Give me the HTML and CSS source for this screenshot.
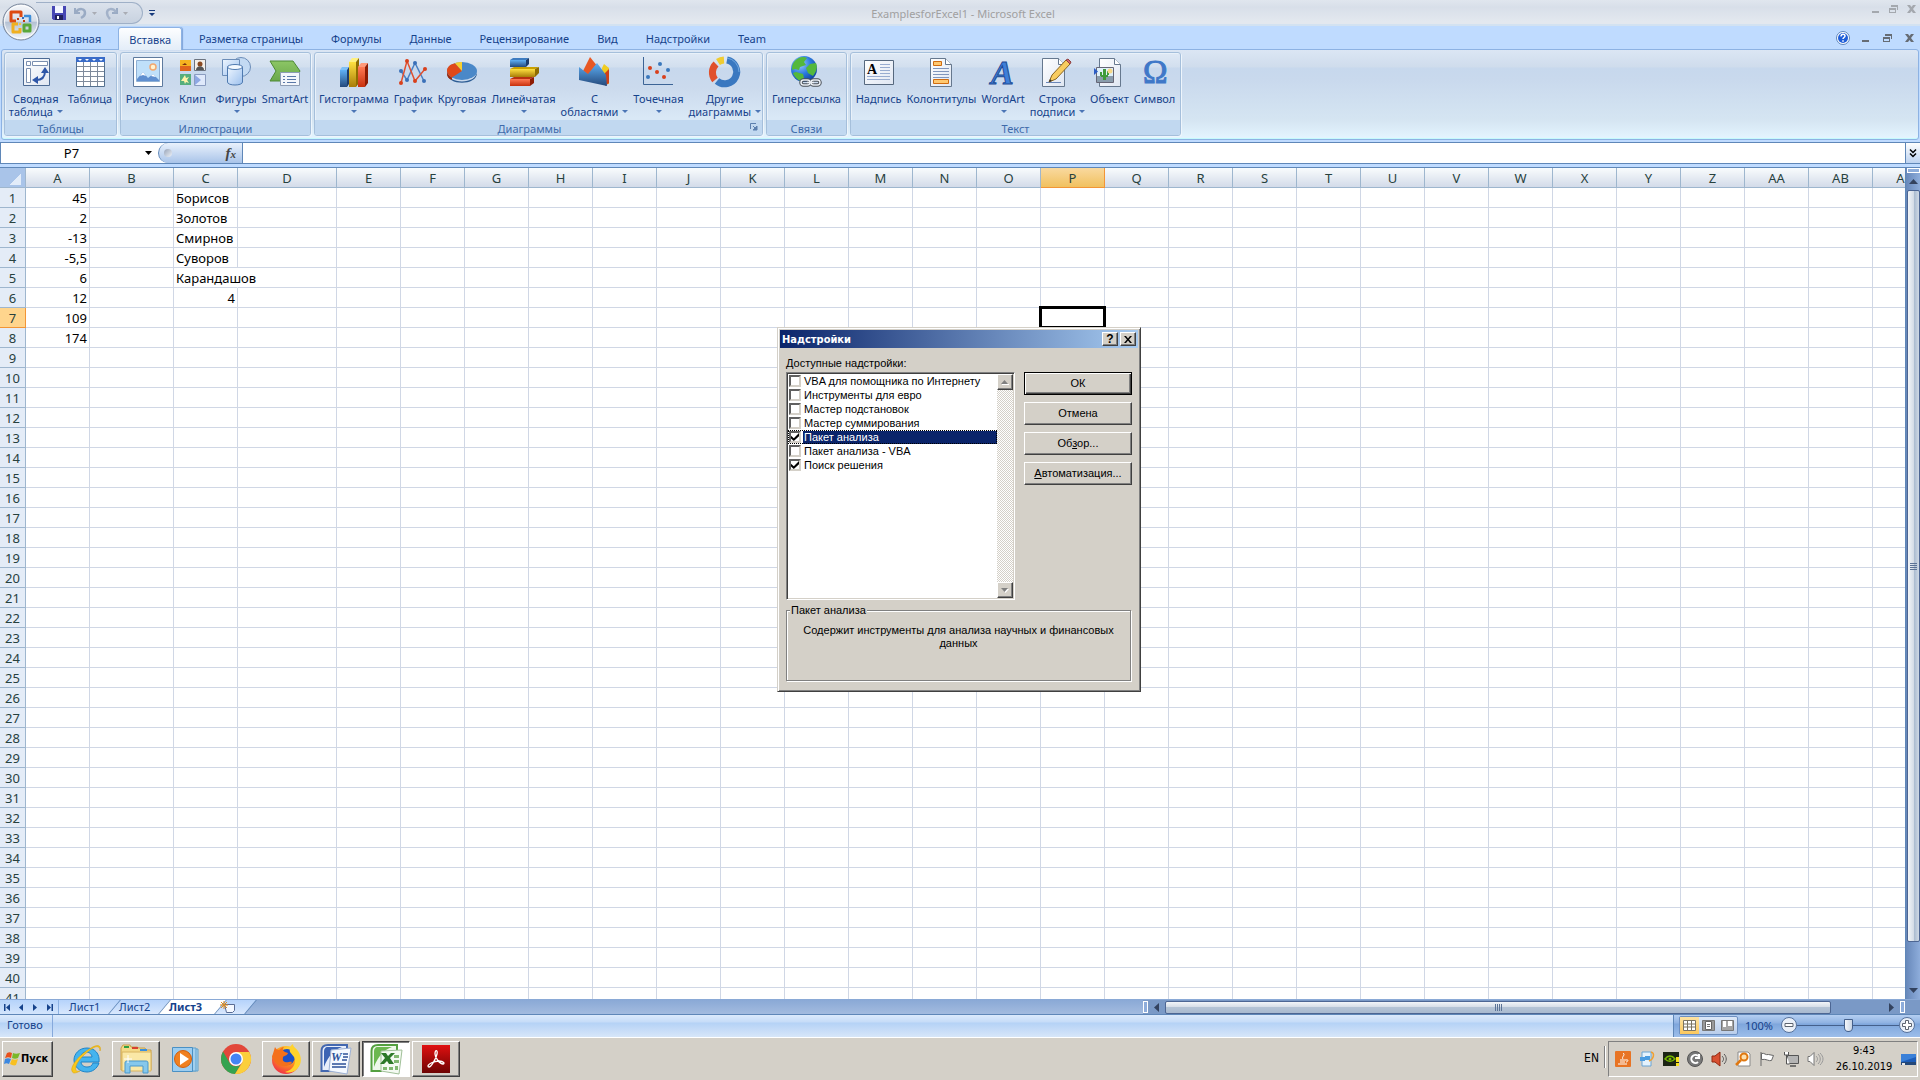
FILE: index.html
```html
<!DOCTYPE html>
<html lang="ru">
<head>
    <meta charset="UTF-8">
    <meta name="viewport" content="width=device-width, initial-scale=1.0">
    <title>ExamplesforExcel1 - Microsoft Excel</title>
    <link rel="stylesheet" href="styles.css">
</head>
<body>
    <!-- Общие градиенты для иконок -->
    <svg class="defs" width="0" height="0" aria-hidden="true">
        <defs>
            <linearGradient id="gBlue" x1="0" y1="0" x2="0" y2="1"><stop offset="0" stop-color="#5fb0f5"/><stop offset="1" stop-color="#24497c"/></linearGradient>
            <linearGradient id="gBlueSoft" x1="0" y1="0" x2="1" y2="1"><stop offset="0" stop-color="#eef6ff"/><stop offset="1" stop-color="#9cc0ee"/></linearGradient>
            <linearGradient id="gRed" x1="0" y1="0" x2="0" y2="1"><stop offset="0" stop-color="#ff7a55"/><stop offset="1" stop-color="#c8300c"/></linearGradient>
            <linearGradient id="gYellow" x1="0" y1="0" x2="0" y2="1"><stop offset="0" stop-color="#ffe040"/><stop offset="1" stop-color="#a87c08"/></linearGradient>
            <linearGradient id="gGreen" x1="0" y1="0" x2="0" y2="1"><stop offset="0" stop-color="#8cc665"/><stop offset="1" stop-color="#6aa84a"/></linearGradient>
            <linearGradient id="gPaper" x1="0" y1="0" x2="1" y2="1"><stop offset="0" stop-color="#ffffff"/><stop offset="1" stop-color="#dfe6f2"/></linearGradient>
            <linearGradient id="gPdf" x1="0" y1="0" x2="0" y2="1"><stop offset="0" stop-color="#e01010"/><stop offset="1" stop-color="#6e0303"/></linearGradient>
            <linearGradient id="gOrb" x1="0" y1="0" x2="0" y2="1"><stop offset="0" stop-color="#f6f8fb"/><stop offset="0.48" stop-color="#d6dde8"/><stop offset="0.5" stop-color="#b3c0d3"/><stop offset="1" stop-color="#f4f8fc"/></linearGradient>
            <radialGradient id="gGlobe" cx="0.35" cy="0.3" r="0.8"><stop offset="0" stop-color="#9fd0ff"/><stop offset="0.5" stop-color="#2d7be0"/><stop offset="1" stop-color="#0b3a94"/></radialGradient>
            <radialGradient id="gFox" cx="0.6" cy="0.2" r="0.9"><stop offset="0" stop-color="#ffe43a"/><stop offset="0.45" stop-color="#ff9a1c"/><stop offset="1" stop-color="#ee1f4e"/></radialGradient>
        </defs>
    </svg>

    <header class="titlebar">
        <div class="quick-access">
            <button type="button" aria-label="Сохранить">
                <svg width="14" height="14" viewBox="0 0 14 14"><path d="M0 0h14v14H1.500L0 12.500z" fill="#4646b4"/><path d="M3 0h8v7H3z" fill="#f2f5ff"/><path d="M3 9h8v5H3z" fill="#20205c"/><path d="M5 10h2v3H5z" fill="#fff"/></svg>
            </button>
            <button type="button" aria-label="Отменить">
                <svg width="14" height="14" viewBox="0 0 14 14"><path d="M1 2v5h5" fill="none" stroke="#9aabc4" stroke-width="2"/><path d="M2 6c3-4 9-4 9 1 0 2-2 4-4 5" fill="none" stroke="#9aabc4" stroke-width="2.500"/></svg>
                <svg width="5" height="3" viewBox="0 0 5 3"><path d="M0 0h5L2.500 3z" fill="#a9acb4"/></svg>
            </button>
            <button type="button" aria-label="Вернуть">
                <svg width="14" height="14" viewBox="0 0 14 14"><path d="M12 2v5H7" fill="none" stroke="#9aabc4" stroke-width="2"/><path d="M11 6C8 2 2 2 2 7c0 2 1 4 3 6" fill="none" stroke="#a3b2c9" stroke-width="2.500"/></svg>
                <svg width="5" height="3" viewBox="0 0 5 3"><path d="M0 0h5L2.500 3z" fill="#a9acb4"/></svg>
            </button>
        </div>
        <button type="button" class="qat-more" aria-label="Настройка панели быстрого доступа">
            <svg width="6" height="7" viewBox="0 0 6 7"><path d="M0 0h6v1H0zM0 3h6L3 6z" fill="#173a7c"/></svg>
        </button>
        <h1 class="title">ExamplesforExcel1 - Microsoft Excel</h1>
        <div class="window-buttons faded">
            <button type="button" aria-label="Свернуть"><svg width="9" height="9" viewBox="0 0 9 9"><path d="M1 6h7v2H1z"/></svg></button>
            <button type="button" aria-label="Восстановить"><svg width="9" height="9" viewBox="0 0 9 9"><path d="M2 0h7v5H8V2H2zM0 3h7v5H0zM1 5v2h5V5z" fill-rule="evenodd"/></svg></button>
            <button type="button" aria-label="Закрыть"><svg width="9" height="9" viewBox="0 0 9 9"><path d="M0 0h3l1.500 2L6 0h3L6 4l3 4H6L4.500 6 3 8H0l3-4z"/></svg></button>
        </div>
    </header>
    <button type="button" class="office-button" aria-label="Кнопка Office">
        <svg width="38" height="38" viewBox="0 0 38 38">
            <circle cx="19" cy="19" r="18" fill="url(#gOrb)" stroke="#76849a"/>
            <circle cx="19" cy="19" r="16.500" fill="none" stroke="#fff" stroke-opacity=".8"/>
            <g fill="none" stroke-width="3" stroke-linejoin="round">
                <path d="M14 18H9V9h10v5" stroke="#dd4b12"/>
                <path d="M22 13h6v6" stroke="#3f8ed8" stroke-width="2.500"/>
                <path d="M16 21h-5v8h7v-4" stroke="#f0b020"/>
                <path d="M22 22h6v6h-6z" stroke="#5aa83a"/>
            </g>
            <path d="M15 15h2v2h-2zM21 17h2v2h-2z" fill="#c03a0c"/><path d="M20 14h2v2h-2z" fill="#2c6cc0"/><path d="M17 20h2v2h-2z" fill="#f5c63c"/>
        </svg>
    </button>

    <nav class="tabs">
        <button type="button">Главная</button>
        <button type="button" class="active">Вставка</button>
        <button type="button">Разметка страницы</button>
        <button type="button">Формулы</button>
        <button type="button">Данные</button>
        <button type="button">Рецензирование</button>
        <button type="button">Вид</button>
        <button type="button">Надстройки</button>
        <button type="button">Team</button>
        <div class="window-buttons">
            <button type="button" aria-label="Справка"><svg width="14" height="14" viewBox="0 0 14 14"><circle cx="7" cy="7" r="6.500" fill="#fff" stroke="#5d85bd"/><circle cx="7" cy="7" r="5" fill="#1f5ed8"/><path d="M5 5.500c0-3 4-3 4-.5 0 1.500-2 1.500-2 3M7 9.300v1.500" fill="none" stroke="#fff" stroke-width="1.500"/></svg></button>
            <button type="button" aria-label="Свернуть книгу"><svg width="9" height="9" viewBox="0 0 9 9"><path d="M1 6h7v2H1z"/></svg></button>
            <button type="button" aria-label="Восстановить книгу"><svg width="9" height="9" viewBox="0 0 9 9"><path d="M2 0h7v5H8V2H2zM0 3h7v5H0zM1 5v2h5V5z" fill-rule="evenodd"/></svg></button>
            <button type="button" aria-label="Закрыть книгу"><svg width="9" height="9" viewBox="0 0 9 9"><path d="M0 0h3l1.500 2L6 0h3L6 4l3 4H6L4.500 6 3 8H0l3-4z"/></svg></button>
        </div>
    </nav>

    <section class="ribbon">
        <div class="group tables">
            <div class="tools">
                <button type="button">
                    <svg width="32" height="32" viewBox="0 0 32 32"><path d="M3.500 2.500h26v27h-26z" fill="url(#gPaper)" stroke="#4c6a94"/><path d="M6.500 5.500h4v4h-4zM12.500 5.500h15v4h-15zM6.500 12.500h4v14h-4z" fill="#fff" stroke="#7a8fb0"/><path d="M16 24c6 0 9-3 9-9" fill="none" stroke="#2e56a8" stroke-width="2"/><path d="M25 11l4 6h-8zM12 24l6-4v8z" fill="#2e56a8"/></svg>
                    <span>Сводная<br>таблица <i class="arrow"></i></span>
                </button>
                <button type="button">
                    <svg width="32" height="32" viewBox="0 0 32 32"><path d="M2.500 1.500h28v29h-28z" fill="#fff" stroke="#54708f"/><path d="M2 1h29v5H2z" fill="#3a6cc8"/><path d="M4 3h4L6 5zM11 3h4l-2 2zM18 3h4l-2 2zM25 3h4l-2 2z" fill="#fff"/><path d="M3 10.500h27M3 15.500h27M3 20.500h27M3 25.500h27M9.500 6v24M16.500 6v24M23.500 6v24" stroke="#7f8b9c"/></svg>
                    <span>Таблица</span>
                </button>
            </div>
            <h2>Таблицы</h2>
        </div>
        <div class="group pictures">
            <div class="tools">
                <button type="button">
                    <svg width="32" height="32" viewBox="0 0 32 32"><path d="M1.500 1.500h29v29h-29z" fill="#fff" stroke="#5e7a9e"/><path d="M4.500 4.500h23v21h-23z" fill="#bfe0fa" stroke="#8fb0d4"/><circle cx="21" cy="11" r="3" fill="#fff3d0" stroke="#f2a870" stroke-width="1.500"/><path d="M5 23l6-7 5 6 5-4 6 6v1H5z" fill="#5f8fd0"/><path d="M8 20l3-4 3 4-3-1zM19 20l2-2 3 3z" fill="#fff"/></svg>
                    <span>Рисунок</span>
                </button>
                <button type="button">
                    <svg width="32" height="32" viewBox="0 0 32 32"><path d="M4 4h11v11H4z" fill="#f6b420"/><path d="M4 10h11v5H4z" fill="#e0661c"/><path d="M6 9l3-2 2 2z" fill="#7a2f10"/><path d="M18.500 3.500h11v11h-11z" fill="#f4efe8" stroke="#6c7480"/><circle cx="24" cy="8" r="2.500" fill="#8a4a22"/><path d="M20 14c0-5 8-5 8 0z" fill="#555"/><path d="M4 18h11v11H4z" fill="#56ae7e"/><path d="M9 19l1 3 3-1-2 3 2 3-3-1-1 2-1-3-3 0 2-3z" fill="#fff3a8"/><path d="M18.500 18.500h11v11h-11z" fill="#dfe9fb" stroke="#8a9cc0"/><path d="M19 19l6 5-6 5z" fill="#8ea8e4"/></svg>
                    <span>Клип</span>
                </button>
                <button type="button">
                    <svg width="32" height="32" viewBox="0 0 32 32"><circle cx="21" cy="11" r="9.500" fill="#c3daf3" stroke="#6c8db8"/><path d="M2.500 3.500h17v16h-17z" fill="url(#gBlueSoft)" stroke="#6c8db8"/><path d="M7.500 11v15c0 4 15 4 15 0V11z" fill="url(#gBlueSoft)" stroke="#4f7ab0"/><ellipse cx="15" cy="11" rx="7.500" ry="2.500" fill="#f4f9ff" stroke="#4f7ab0"/></svg>
                    <span>Фигуры<br><i class="arrow"></i></span>
                </button>
                <button type="button">
                    <svg width="32" height="32" viewBox="0 0 32 32"><path d="M1 5h23l7 10-6 10H1l6-10z" fill="url(#gGreen)" stroke="#4e8a36"/><path d="M11.500 16.500h19v13h-19z" fill="#f3f6fb" stroke="#8c9cb4"/><path d="M14 20.500h2M14 23.500h2M14 26.500h2M18 20.500h9M18 23.500h9M18 26.500h9" stroke="#5a78a8"/></svg>
                    <span>SmartArt</span>
                </button>
            </div>
            <h2>Иллюстрации</h2>
        </div>
        <div class="group charts">
            <div class="tools">
                <button type="button">
                    <svg width="32" height="32" viewBox="0 0 32 32"><path d="M2 14h7v17H2z" fill="url(#gBlue)"/><path d="M2 14l2-3h7l-2 3z" fill="#7ec0f8"/><path d="M9 14l2-3v17l-2 3z" fill="#1c3c6c"/><path d="M11 6h7v25h-7z" fill="url(#gYellow)"/><path d="M11 6l3-4h7l-3 4z" fill="#fff080"/><path d="M18 6l3-4v25l-3 4z" fill="#8f6c00"/><path d="M20 11h7v20h-7z" fill="url(#gRed)"/><path d="M20 11l3-4h7l-3 4z" fill="#ff9878"/><path d="M27 11l3-4v20l-3 4z" fill="#8e1c04"/></svg>
                    <span>Гистограмма<br><i class="arrow"></i></span>
                </button>
                <button type="button">
                    <svg width="32" height="32" viewBox="0 0 32 32"><path d="M4 15l6 9 8-17 9 18" fill="none" stroke="#4a80c4" stroke-width="1.500"/><path d="M4 27l6-22 8 20 10-12" fill="none" stroke="#e05030" stroke-width="1.500"/><g fill="#3a70b8"><circle cx="4" cy="15" r="2"/><circle cx="10" cy="24" r="2"/><circle cx="18" cy="7" r="2"/><circle cx="27" cy="25" r="2"/></g><g fill="#d8401c"><circle cx="4" cy="27" r="2"/><circle cx="10" cy="5" r="2"/><circle cx="18" cy="25" r="2"/><circle cx="28" cy="13" r="2"/></g></svg>
                    <span>График<br><i class="arrow"></i></span>
                </button>
                <button type="button">
                    <svg width="32" height="32" viewBox="0 0 32 32"><path d="M1 15c0 14 30 14 30 0v2c0 13-30 13-30 0z" fill="#2c5c94"/><path d="M1 15v3c0 3 2 5 5 6v-4z" fill="#a02808"/><ellipse cx="16" cy="15" rx="15" ry="9" fill="#4a88c8"/><path d="M16 15L6 21.500C-2 17 0 9 9 7.200z" fill="#e04818"/><path d="M16 15L9 7.200C11 6 14 6 16 6z" fill="#f8d030"/></svg>
                    <span>Круговая<br><i class="arrow"></i></span>
                </button>
                <button type="button">
                    <svg width="32" height="32" viewBox="0 0 32 32"><path d="M2 4h16v7H2z" fill="url(#gBlue)"/><path d="M2 4l3-2h16l-3 2z" fill="#3f7cc0"/><path d="M18 4l3-2v6l-3 3z" fill="#1c3c6c"/><path d="M2 13h25v8H2z" fill="url(#gYellow)"/><path d="M2 13l4-2h25l-4 2z" fill="#c8a000"/><path d="M27 13l4-2v6l-4 4z" fill="#8f6c00"/><path d="M2 23h20v7H2z" fill="url(#gRed)"/><path d="M2 23l4-2h20l-4 2z" fill="#b83010"/><path d="M22 23l4-2v6l-4 3z" fill="#8e1c04"/></svg>
                    <span>Линейчатая<br><i class="arrow"></i></span>
                </button>
                <button type="button">
                    <svg width="32" height="32" viewBox="0 0 32 32"><path d="M24 12l2-4 5 4v16h-8z" fill="#f0cc20"/><path d="M27 17l4-4v14l-4 3z" fill="#d04018"/><path d="M4 17L12 1l8 10-6 10z" fill="#e85824"/><path d="M1 11l9 7 9-11 9 12 1 11-28-6z" fill="url(#gBlue)"/></svg>
                    <span>С<br>областями <i class="arrow"></i></span>
                </button>
                <button type="button">
                    <svg width="32" height="32" viewBox="0 0 32 32"><path d="M1.500 1v27.500H31" fill="none" stroke="#3c6496"/><g fill="#d8401c"><circle cx="8" cy="12" r="2"/><circle cx="15" cy="16" r="2"/><circle cx="22" cy="21" r="2"/></g><g fill="#3a78bc"><circle cx="18" cy="8" r="2"/><circle cx="26" cy="14" r="2"/><circle cx="6" cy="21" r="2"/></g></svg>
                    <span>Точечная<br><i class="arrow"></i></span>
                </button>
                <button type="button">
                    <svg width="32" height="32" viewBox="0 0 32 32"><g fill="none" stroke-width="7"><path d="M18 4A12 12 0 1 1 8 25" stroke="#3a78c0"/><path d="M6 24A12 12 0 0 1 7 8" stroke="#e0502c"/><path d="M9 6A12 12 0 0 1 15 4" stroke="#f0cc30"/></g><path d="M18 2A14 14 0 0 1 30 16" fill="none" stroke="#70a8e0"/></svg>
                    <span>Другие<br>диаграммы <i class="arrow"></i></span>
                </button>
            </div>
            <h2>Диаграммы</h2>
            <button type="button" class="launcher" aria-label="Параметры диаграмм"><svg width="8" height="8" viewBox="0 0 8 8"><path d="M.500 6V.500H6" fill="none" stroke="#5b7fae"/><path d="M3 3l3 3M7 3v4H3z" fill="#5b7fae" stroke="#5b7fae"/></svg></button>
        </div>
        <div class="group links">
            <div class="tools">
                <button type="button">
                    <svg width="32" height="32" viewBox="0 0 32 32"><circle cx="14" cy="13" r="13" fill="url(#gGlobe)"/><path d="M4 6c4-5 9-6 13-4l-3 4 2 3-6 2-1 3-4-1-3 1c0-3 0-5 2-8zM20 8l6-1c2 5 0 9-3 13l-5-3-2-5zM6 16l7 2 1 4-3 3c-4-1-7-5-8-8z" fill="#54b83c"/><g fill="none" stroke="#4a5058" stroke-width="3.500"><rect x="11" y="24" width="9" height="5" rx="2.500"/><rect x="21" y="24" width="9" height="5" rx="2.500"/></g><g fill="none" stroke="#e8ecf2" stroke-width="1.500"><rect x="11" y="24" width="9" height="5" rx="2.500"/><rect x="21" y="24" width="9" height="5" rx="2.500"/><path d="M17 26.500h7"/></g></svg>
                    <span>Гиперссылка</span>
                </button>
            </div>
            <h2>Связи</h2>
        </div>
        <div class="group text">
            <div class="tools">
                <button type="button">
                    <svg width="32" height="32" viewBox="0 0 32 32"><path d="M1.500 4.500h29v24h-29z" fill="url(#gPaper)" stroke="#56687e"/><text x="4" y="18" class="glyph-a">A</text><path d="M17 8.500h10M17 11.500h10M17 14.500h10M17 17.500h10M4 20.500h23M4 23.500h23" stroke="#98acd0"/></svg>
                    <span>Надпись</span>
                </button>
                <button type="button">
                    <svg width="32" height="32" viewBox="0 0 32 32"><path d="M5.500 2.500h15l6 6v22h-21z" fill="url(#gPaper)" stroke="#66788e"/><path d="M20.500 2.500v6h6" fill="#fff" stroke="#66788e"/><path d="M8.500 5.500h8v4h-8zM8.500 23.500h15v4h-15z" fill="#ffc870" stroke="#d06c10"/><path d="M8 12.500h16M8 15.500h16M8 18.500h16M8 21.500h16" stroke="#8296bc"/></svg>
                    <span>Колонтитулы</span>
                </button>
                <button type="button">
                    <svg width="32" height="32" viewBox="0 0 32 32"><text x="4" y="28" class="glyph-wa">A</text></svg>
                    <span>WordArt<br><i class="arrow"></i></span>
                </button>
                <button type="button">
                    <svg width="32" height="32" viewBox="0 0 32 32"><path d="M1.500 2.500h16l6 6v22h-22z" fill="url(#gPaper)" stroke="#66788e"/><path d="M17.500 2.500v6h6" fill="#fff" stroke="#66788e"/><path d="M5 26.500h15" stroke="#6a86b8"/><path d="M8 26l3-7L25 4l4 4-14 15z" fill="#f8cc60" stroke="#8a6420"/><path d="M25 4l2-1 3 3-1 2z" fill="#d86868" stroke="#904040"/><path d="M8 26l1-3 2 2z" fill="#333"/></svg>
                    <span>Строка<br>подписи <i class="arrow"></i></span>
                </button>
                <button type="button">
                    <svg width="32" height="32" viewBox="0 0 32 32"><path d="M6.500 2.500h15l6 6v22h-21z" fill="url(#gPaper)" stroke="#66788e"/><path d="M21.500 2.500v6h6" fill="#fff" stroke="#66788e"/><path d="M3.500 11.500h17v15h-17z" fill="#dff0fa" stroke="#667"/><path d="M4 20h16v6H4z" fill="#8a9cac"/><path d="M10 24V13h3v11zM7 16h2v4H7zM14 15h2v4h-2zM8 19h7v2H8z" fill="#3f9a3c"/><circle cx="17" cy="15" r="2.500" fill="#f8d888"/><path d="M1 12l4 3.500L1 19z" fill="#2c5cc4"/></svg>
                    <span>Объект</span>
                </button>
                <button type="button">
                    <svg width="32" height="32" viewBox="0 0 32 32"><text x="4" y="27" class="glyph-omega">Ω</text></svg>
                    <span>Символ</span>
                </button>
            </div>
            <h2>Текст</h2>
        </div>
    </section>

    <section class="formula-bar">
        <input type="text" class="name-box" value="P7" aria-label="Имя ячейки">
        <button type="button" class="name-drop" aria-label="Список имён"><svg width="7" height="4" viewBox="0 0 7 4"><path d="M0 0h7L3.500 4z"/></svg></button>
        <div class="fx-pill">
            <span class="knob"></span>
            <button type="button" class="fx" aria-label="Вставить функцию">f<small>x</small></button>
        </div>
        <input type="text" class="formula" aria-label="Строка формул">
        <button type="button" class="expand" aria-label="Развернуть строку формул"><svg width="8" height="9" viewBox="0 0 8 9"><path d="M1 .500l3 3 3-3M1 4.500l3 3 3-3" fill="none" stroke="#000" stroke-width="1.500"/></svg></button>
    </section>

    <main class="workspace">
        <div class="sheet">
            <table class="grid" id="grid"></table>
        </div>
        <div class="vscroll">
            <span class="split"></span>
            <button type="button" aria-label="Вверх"><svg width="9" height="5" viewBox="0 0 9 5"><path d="M0 5h9L4.500 0z"/></svg></button>
            <span class="thumb"></span>
            <button type="button" class="down" aria-label="Вниз"><svg width="9" height="5" viewBox="0 0 9 5"><path d="M0 0h9L4.500 5z"/></svg></button>
        </div>

        <form class="dialog">
            <div class="dialog-title">
                <h2>Надстройки</h2>
                <button type="button" aria-label="Справка">?</button>
                <button type="button" aria-label="Закрыть"><svg width="8" height="7" viewBox="0 0 8 7"><path d="M0 0h2l2 2.500L6 0h2L5 3.500 8 7H6L4 4.500 2 7H0l3-3.500z"/></svg></button>
            </div>
            <div class="dialog-body">
                <div class="addins">
                    <p><u>Д</u>оступные надстройки:</p>
                    <div class="listbox">
                        <div class="items">
                            <label><input type="checkbox"><span>VBA для помощника по Интернету</span></label>
                            <label><input type="checkbox"><span>Инструменты для евро</span></label>
                            <label><input type="checkbox"><span>Мастер подстановок</span></label>
                            <label><input type="checkbox"><span>Мастер суммирования</span></label>
                            <label class="chosen"><input type="checkbox" checked><span>Пакет анализа</span></label>
                            <label><input type="checkbox"><span>Пакет анализа - VBA</span></label>
                            <label><input type="checkbox" checked><span>Поиск решения</span></label>
                        </div>
                        <div class="list-scroll">
                            <button type="button" aria-label="Вверх"><svg width="8" height="5" viewBox="0 0 8 5"><path d="M0 4h7L3.500 0z" fill="#808080"/><path d="M1 4.500h7" stroke="#fff"/></svg></button>
                            <button type="button" aria-label="Вниз"><svg width="8" height="5" viewBox="0 0 8 5"><path d="M1 1h7L4.500 5z" fill="#fff"/><path d="M0 0h7L3.500 4z" fill="#808080"/></svg></button>
                        </div>
                    </div>
                </div>
                <div class="dialog-buttons">
                    <button type="button" class="default">ОК</button>
                    <button type="button">Отмена</button>
                    <button type="button">Об<u>з</u>ор...</button>
                    <button type="button"><u>А</u>втоматизация...</button>
                </div>
            </div>
            <fieldset>
                <legend>Пакет анализа</legend>
                <p>Содержит инструменты для анализа научных и финансовых данных</p>
            </fieldset>
        </form>
    </main>

    <section class="sheet-bar">
        <div class="sheet-nav">
            <button type="button" aria-label="Первый лист"><svg width="7" height="7" viewBox="0 0 7 7"><path d="M0 0h1.500v7H0zM6 0v7L2 3.500z"/></svg></button>
            <button type="button" aria-label="Предыдущий лист"><svg width="7" height="7" viewBox="0 0 7 7"><path d="M5 0v7L1 3.500z"/></svg></button>
            <button type="button" aria-label="Следующий лист"><svg width="7" height="7" viewBox="0 0 7 7"><path d="M1 0v7l4-3.500z"/></svg></button>
            <button type="button" aria-label="Последний лист"><svg width="7" height="7" viewBox="0 0 7 7"><path d="M5.500 0H7v7H5.500zM1 0v7l4-3.500z"/></svg></button>
        </div>
        <div class="sheet-tabs">
            <button type="button"><span>Лист1</span></button>
            <button type="button"><span>Лист2</span></button>
            <button type="button" class="active"><span>Лист3</span></button>
            <button type="button" class="insert" aria-label="Вставить лист"><svg width="16" height="12" viewBox="0 0 16 12"><path d="M4.500 3.500h10v6l-2 2h-6z" fill="#f4f8ff" stroke="#5a6c94"/><path d="M4 0v8M0 4h8M1 1l6 6M7 1L1 7" stroke="#e08a18"/></svg></button>
        </div>
        <div class="hscroll">
            <span class="split"></span>
            <button type="button" aria-label="Влево"><svg width="5" height="9" viewBox="0 0 5 9"><path d="M5 0v9L0 4.500z"/></svg></button>
            <span class="thumb"></span>
            <button type="button" class="right" aria-label="Вправо"><svg width="5" height="9" viewBox="0 0 5 9"><path d="M0 0v9l5-4.500z"/></svg></button>
            <span class="split"></span>
        </div>
    </section>

    <section class="status-bar">
        <span class="ready">Готово</span>
        <div class="zoom">
            <div class="views">
                <button type="button" class="active" aria-label="Обычный"><svg width="13" height="11" viewBox="0 0 13 11"><path d="M.500.500h12v10H.500zM0 4h13M0 7h13M4.500 0v11M8.500 0v11" fill="#fff" stroke="#7a7464"/></svg></button>
                <button type="button" aria-label="Разметка страницы"><svg width="13" height="11" viewBox="0 0 13 11"><path d="M.500.500h12v10H.500z" fill="#9a9a9a" stroke="#777"/><path d="M3.500 1.500h6v8h-6z" fill="#fff" stroke="#666"/><path d="M5 4.500h3M5 6.500h3" stroke="#777"/></svg></button>
                <button type="button" aria-label="Страничный"><svg width="13" height="11" viewBox="0 0 13 11"><path d="M.500.500h12v10H.500z" fill="#a5a5a5" stroke="#777"/><path d="M2 1h3v6H2zM7 1h4v5H7z" fill="#fff"/></svg></button>
            </div>
            <button type="button" class="percent">100%</button>
            <button type="button" aria-label="Уменьшить"><svg width="16" height="16" viewBox="0 0 16 16"><circle cx="8" cy="8" r="7.500" fill="#e9eff8" stroke="#55719c"/><path d="M4 6.500h8v3H4z" fill="#fff" stroke="#5d6470"/></svg></button>
            <input type="range" min="0" max="100" value="50" aria-label="Масштаб">
            <button type="button" aria-label="Увеличить"><svg width="16" height="16" viewBox="0 0 16 16"><circle cx="8" cy="8" r="7.500" fill="#e9eff8" stroke="#55719c"/><path d="M6.500 3.500h3v3h3v3h-3v3h-3v-3h-3v-3h3z" fill="#fff" stroke="#5d6470"/></svg></button>
        </div>
    </section>

    <footer class="taskbar">
        <button type="button" class="start">
            <svg width="16" height="16" viewBox="0 0 16 16"><path d="M3 2c2-1 3-1 5 0L7 7C5 6 4 6 1 7z" fill="#e8501c"/><path d="M9 2c2 1 4 1 7 0l-2 5c-2 1-4 1-6 0z" fill="#7ab828"/><path d="M1 8c2-1 4-1 6 0l-2 5c-2-1-3-1-5 0z" fill="#3c88e0"/><path d="M8 8c2 1 4 1 6 0l-2 6c-2 1-4 0-6-1z" fill="#f8c020"/></svg>
            Пуск
        </button>
        <div class="apps">
            <button type="button" aria-label="Internet Explorer"><svg width="32" height="32" viewBox="0 0 32 32"><path d="M23 20h6c-2 6-7 9-12 9C9 29 4 23 4 17S9 5 17 5s13 6 12 14H11c0 3 3 5 6 5s5-1 6-4zM11 14h11c0-3-3-5-6-5s-5 2-5 5z" fill="#45b4ee" stroke="#1f84c8"/><path d="M30 8c2-6-3-7-9-3C10 11 0 23 2 28c1 4 6 1 8 0-4 1-5-1-4-5C9 15 19 7 25 4c4-1 5 1 5 4z" fill="#f8c81c" stroke="#d89c08" stroke-width=".5"/></svg></button>
            <button type="button" class="open" aria-label="Проводник"><svg width="34" height="32" viewBox="0 0 34 32"><path d="M2 5l2-3h7l1 2h6l2 1h6l1 2h5v20H2z" fill="#f3d987" stroke="#c9a048"/><path d="M5 3h5v2H5z" fill="#2fa040"/><path d="M13 4h6v2h-6z" fill="#d84030"/><path d="M21 6h7v2h-7z" fill="#3890e0"/><path d="M3 9h29v19H3z" fill="#fae8a6" stroke="#d8b460"/><path d="M6 30V20c0-2 1-2 3-2h17c2 0 3 0 3 2v10h-5v-7H11v7z" fill="#86c8ec" stroke="#4a98cc"/><path d="M9 12v8M5 16h8" stroke="#fff"/></svg></button>
            <button type="button" aria-label="Проигрыватель"><svg width="32" height="32" viewBox="0 0 32 32"><path d="M14 6h14v22H14z" fill="#b0d8f0" stroke="#5fa0cc"/><path d="M8 5h18v23H8z" fill="#a4d0ee" stroke="#5fa0cc"/><path d="M2.500 4.500h20v24h-20z" fill="#9ccdf0" stroke="#4a90c4"/><circle cx="13" cy="16" r="8.500" fill="#f08020" stroke="#d06010"/><path d="M10 10l9 6-9 6z" fill="#fff"/></svg></button>
            <button type="button" aria-label="Chrome"><svg width="32" height="32" viewBox="0 0 32 32"><circle cx="16" cy="16" r="15" fill="#e2473a"/><path d="M3 8.500A15 15 0 0 0 15 31l7-11.500a7 7 0 0 1-12.500 0z" fill="#34a350"/><path d="M16 9h13.300A15 15 0 0 1 15 31l7.500-12z" fill="#fbcf3c"/><circle cx="16" cy="16" r="7" fill="#fff"/><circle cx="16" cy="16" r="5.500" fill="#4484f4"/></svg></button>
            <button type="button" class="open" aria-label="Firefox"><svg width="32" height="32" viewBox="0 0 32 32"><circle cx="16" cy="17" r="14" fill="url(#gFox)"/><circle cx="17" cy="14" r="8" fill="#1c50c8"/><path d="M2 14l3-10c1 2 2 3 4 3 2-2 3-3 5-3-2 2-1 4 1 5l3 1c0 2-4 3-5 4 0 2-1 4 2 5 3 1 5-1 7 0-2 5-11 6-16 1z" fill="#f4701c"/><path d="M20 9c-1-4 0-6 3-8 0 3 3 4 5 7 4 6 4 13-1 18-4 4-9 4-12 3 8-2 12-9 9-15z" fill="#ffd22c"/></svg></button>
            <button type="button" class="open" aria-label="Word"><svg width="32" height="32" viewBox="0 0 32 32"><path d="M27 7V2H8C4 2 1.500 4 1.500 8v20H12" fill="#e8eefa" stroke="#4468b0" stroke-width="2"/><path d="M4 24V9c0-3 1-5 4-5h14c-8 3-14 9-18 20z" fill="#3c64b4"/><path d="M11 7l20-2-4 26-18-3z" fill="#f5f9ff" stroke="#9cb0d4"/><text x="11" y="18" class="glyph-word">W</text><path d="M23 11h5M23 14h5M22 17h5M12 21h14M12 24h14" stroke="#2c5098" stroke-width="1.500"/></svg></button>
            <button type="button" class="open pressed" aria-label="Excel"><svg width="32" height="32" viewBox="0 0 32 32"><path d="M27 7V2H8C4 2 1.500 4 1.500 8v20H12" fill="#eef8ea" stroke="#54a040" stroke-width="2"/><path d="M4 24V9c0-3 1-5 4-5h14c-8 3-14 9-18 20z" fill="#6cb850"/><path d="M11 8l21-1-3 24-18-3z" fill="#f4faf2" stroke="#a0c098"/><path d="M11 10h5l2 3 3-3h4l-5 5 4 6h-5l-2-3-3 3h-4l5-6z" fill="#2c7828"/><path d="M24 12h5v3h-5zM24 17h5v3h-5zM13 24h4v3h-4zM19 24h4v3h-4zM25 23h3v4h-3z" fill="#80b870"/></svg></button>
            <button type="button" class="open" aria-label="Adobe Reader"><svg width="28" height="28" viewBox="0 0 28 28"><path d="M0 0h28v28H0z" fill="url(#gPdf)"/><path d="M6 21c0-2 6-5 11-5s6 3 4 3c-3 0-8-6-8-10 0-5 3-4 2 0-1 5-6 13-8 13-1 0-1-1-1-1z" fill="none" stroke="#fff" stroke-width="1.300"/></svg></button>
        </div>
        <span class="lang">EN</span>
        <div class="tray">
            <svg width="16" height="16" viewBox="0 0 16 16"><rect width="16" height="16" rx="1" fill="#e87424"/><path d="M8 2c3 2-2 4 0 6M5 9h6M5 11h5M3 13h9M11 9c3-1 2 2 0 2" fill="none" stroke="#fff"/></svg>
            <svg width="16" height="16" viewBox="0 0 16 16"><path d="M3 1h9v14H3z" fill="#e4f2fc" stroke="#68a4d4"/><path d="M1 6h5v4H1zM6 5h5v4H6z" fill="#4a9ce0"/><path d="M12 1c4 1 3 7-2 9" fill="none" stroke="#f0a030" stroke-width="1.500"/></svg>
            <svg width="16" height="16" viewBox="0 0 16 16"><path d="M0 1h16v14H0z" fill="#1c2414"/><path d="M2 8c3-4 7-4 10 0-3 3-7 3-10 0z" fill="none" stroke="#76b900" stroke-width="1.500"/><circle cx="7" cy="8" r="1.500" fill="#76b900"/><path d="M13 6h3v5h-3zM13 12h3v3h-3z" fill="#f8e020"/></svg>
            <svg width="16" height="16" viewBox="0 0 16 16"><circle cx="8" cy="8" r="7.500" fill="#787878" stroke="#555"/><path d="M11 5a4 4 0 1 0 0 6M12 3v4H8" fill="none" stroke="#fff" stroke-width="2"/></svg>
            <svg width="16" height="16" viewBox="0 0 16 16"><path d="M1 5h3l5-4v14l-5-4H1z" fill="#d85030" stroke="#902810"/><path d="M11 5c2 2 2 4 0 6M13 3c3 3 3 7 0 10" fill="none" stroke="#555"/></svg>
            <svg width="16" height="16" viewBox="0 0 16 16"><path d="M3 1h10l2 2v12H3z" fill="#fff" stroke="#8a8a8a"/><circle cx="9" cy="6" r="3.500" fill="#fce0b0" stroke="#e07810" stroke-width="2"/><path d="M6 9l-5 5" stroke="#e07810" stroke-width="2.500"/></svg>
            <svg width="16" height="16" viewBox="0 0 16 16"><path d="M2 1v14M2.500 2.500c3-1 4 2 7 1l5 1-2 5c-3 1-5-2-10-1z" fill="#fff" stroke="#666"/></svg>
            <svg width="16" height="16" viewBox="0 0 16 16"><path d="M4.500 4.500h11v8h-11z" fill="#b4b4b4" stroke="#555"/><path d="M7 15h6" stroke="#555" stroke-width="1.500"/><path d="M1.500 1v3h4V1M3.500 4v9h3" fill="#fff" stroke="#555"/></svg>
            <svg width="16" height="16" viewBox="0 0 16 16"><path d="M1 5.500h2l4-4v13l-4-4H1z" fill="#fff" stroke="#777"/><path d="M9 5c2 2 2 4 0 6M11 3c3 3 3 7 0 10M13 2c4 4 4 8 0 12" fill="none" stroke="#999"/></svg>
            <time>9:43<br>26.10.2019</time>
            <button type="button" aria-label="Показать рабочий стол"><svg width="15" height="13" viewBox="0 0 15 13"><path d="M0 1h15v9H0z" fill="#1c5cb8"/><path d="M0 1h15v3L0 9z" fill="#3a80d8"/><path d="M0 9h15v3H0z" fill="#244878"/><path d="M1 10h3v2H1z" fill="#e8e8e8"/></svg></button>
        </div>
    </footer>

    <script>
        // Ширины столбцов, отличные от стандартной
        const widths = { B: 84, D: 99 };
        const columns = 'A B C D E F G H I J K L M N O P Q R S T U V W X Y Z AA AB AC'.split(' ');
        const rowCount = 41;
        const active = { col: 'P', row: 7 };
        const cells = {
            A1: 45, A2: 2, A3: -13, A4: '-5,5', A5: 6, A6: 12, A7: 109, A8: 174,
            C1: 'Борисов', C2: 'Золотов', C3: 'Смирнов', C4: 'Суворов', C5: 'Карандашов', C6: 4
        };

        const grid = document.getElementById('grid');
        let html = '<colgroup><col class="row-head">';
        let total = 26;
        columns.forEach(function(name) {
            const width = widths[name] || 64;
            total += width;
            html += '<col style="width:' + width + 'px">';
        });
        html += '</colgroup><thead><tr><th class="corner"></th>';
        columns.forEach(function(name) {
            html += '<th scope="col"' + (name === active.col ? ' class="current"' : '') + '>' + name + '</th>';
        });
        html += '</tr></thead><tbody>';
        for (let row = 1; row <= rowCount; row++) {
            html += '<tr><th scope="row"' + (row === active.row ? ' class="current"' : '') + '>' + row + '</th>';
            columns.forEach(function(name) {
                const value = cells[name + row];
                let cls = '';
                if (name === active.col && row === active.row) {
                    cls = 'selected';
                } else if (value === 'Карандашов') {
                    cls = 'spill'; // текст заходит в соседнюю ячейку
                } else if (value !== undefined && /^[-\d,]+$/.test(value)) {
                    cls = 'number';
                }
                html += '<td' + (cls ? ' class="' + cls + '"' : '') + '>' + (value === undefined ? '' : value) + '</td>';
            });
            html += '</tr>';
        }
        grid.innerHTML = html + '</tbody>';
        grid.style.width = total + 'px';
    </script>
</body>
</html>
```
FILE: styles.css
```css
* {
    box-sizing: border-box;
}
html, body {
    height: 100%;
}
body {
    margin: 0;
    display: flex;
    flex-direction: column;
    overflow: hidden;
    background: #bfdbff;
    font: 11px/13px "Segoe UI", "Noto Sans", sans-serif;
    color: #15428b;
}
button, input {
    margin: 0;
    padding: 0;
    border: 0;
    background: none;
    font: inherit;
    color: inherit;
}
h1, h2, p {
    margin: 0;
    font: inherit;
}
svg {
    display: block;
    flex: none;
    overflow: visible;
}
.defs {
    position: absolute;
}

/* Заголовок окна */
.titlebar {
    display: flex;
    align-items: flex-start;
    flex: none;
    height: 26px;
    padding: 2px 4px 0 36px;
    background: linear-gradient(#e0e6ee, #d8dfe9 30%, #e3e8ef 90%);
    border-bottom: 2px solid #d3e2f1;
}
.quick-access {
    display: flex;
    align-items: center;
    gap: 8px;
    width: 107px;
    height: 22px;
    padding-left: 16px;
    border: 1px solid #9fb0c7;
    border-left: 0;
    border-radius: 0 11px 11px 0;
    background: linear-gradient(#dbe2ec, #c8d2e0);
}
.quick-access button {
    display: flex;
    align-items: center;
    gap: 4px;
}
.qat-more {
    padding: 8px 6px;
}
.title {
    flex: 1;
    padding-top: 5px;
    padding-right: 106px;
    text-align: center;
    color: #a0a0a0;
}
.window-buttons {
    display: flex;
    align-items: center;
    gap: 13px;
    fill: #666c74;
}
.faded {
    gap: 9px;
    height: 14px;
    fill: #a4a8ae;
}
.office-button {
    position: absolute;
    top: 3px;
    left: 2px;
    z-index: 2;
    border-radius: 50%;
}

/* Вкладки ленты */
.tabs {
    display: flex;
    flex: none;
    gap: 6px;
    height: 23px;
    padding: 1px 6px 0 47px;
}
.tabs > button {
    padding: 0 11px;
}
.tabs > .active {
    position: relative;
    z-index: 1;
    height: 23px;
    border: 1px solid #8db2e3;
    border-bottom: 0;
    border-radius: 3px 3px 0 0;
    padding: 0 10px;
    background: linear-gradient(#fdfeff, #e3edf8);
    box-shadow: 1px 0 1px #7fa4da;
}
.tabs .window-buttons {
    margin-left: auto;
}
.tabs .window-buttons button:first-child {
    margin-right: -2px;
}

/* Лента */
.ribbon {
    display: flex;
    flex: none;
    gap: 3px;
    height: 91px;
    margin: 0 1px;
    padding: 2px 2px 3px;
    border: 1px solid #8db2e3;
    border-radius: 3px;
    background: linear-gradient(#dbe6f4, #cfdcec 17px, #c7d8ed 18px, #c9d9ed 30px, #d5e5f2 70px, #e4f5ff);
    box-shadow: inset 0 -1px #c5fafd;
}
.group {
    position: relative;
    display: flex;
    flex: none;
    flex-direction: column;
    border: 1px solid #a5bfdb;
    border-radius: 3px;
    background: linear-gradient(#dfe9f5, #d2dfee 14px, #c7d8ed 15px, #cbdaed 35px, #d9e8f6 65px);
    box-shadow: 1px 1px #eef5fc, inset 1px 1px #e9f1f9;
}
.tables {
    width: 113px;
}
.pictures {
    width: 191px;
}
.charts {
    width: 449px;
}
.links {
    width: 81px;
}
.text {
    width: 331px;
}
.tools {
    display: flex;
    flex: 1;
    justify-content: center;
    gap: 5px;
    padding-top: 3px;
}
.pictures .tools, .charts .tools {
    padding-left: 3px;
}
.tools button {
    display: flex;
    flex-direction: column;
    align-items: center;
    gap: 4px;
    min-width: 36px;
    white-space: nowrap;
}
.arrow {
    display: inline-block;
    margin-left: 1px;
    vertical-align: 3px;
    border: 3px solid transparent;
    border-top-color: #4b75b5;
    border-bottom: 0;
}
.group h2 {
    height: 15px;
    line-height: 17px;
    border-radius: 0 0 2px 2px;
    background: #c1d8f0;
    text-align: center;
    color: #3e6aaa;
}
/* подпись стоит не по центру из-за кнопки параметров */
.charts h2 {
    padding-right: 18px;
}
.launcher {
    position: absolute;
    right: 4px;
    bottom: 4px;
}
.glyph-a {
    font: bold 14px "Liberation Serif", serif;
}
.glyph-wa {
    font: italic bold 34px "Liberation Serif", serif;
    fill: #3f7fd8;
    stroke: #1d4a94;
}
.glyph-omega {
    font: 33px "Liberation Serif", serif;
    fill: #3f78c8;
    stroke: #3f78c8;
}
.glyph-word {
    font: italic bold 12px "Liberation Serif", serif;
    fill: #2c5098;
}

/* Строка формул */
.formula-bar {
    display: flex;
    flex: none;
    height: 22px;
    margin-top: 2px;
    border-top: 1px solid #5f87b8;
    border-bottom: 1px solid #5f87b8;
    background: #fff;
    color: #000;
}
.name-box {
    width: 142px;
    border-left: 1px solid #5f87b8;
    font-size: 13px;
    text-align: center;
}
.name-drop {
    width: 16px;
    padding-left: 3px;
}
.fx-pill {
    display: flex;
    align-items: center;
    justify-content: space-between;
    width: 85px;
    padding: 0 6px 0 5px;
    border-left: 1px solid #5f87b8;
    border-right: 1px solid #5f87b8;
    border-radius: 11px 0 0 11px;
    background: linear-gradient(#e9f1fc, #a9c4e9);
}
.knob {
    width: 8px;
    height: 8px;
    border-radius: 50%;
    background: linear-gradient(135deg, #98a4b8, #eef2f8);
}
.fx {
    font: italic bold 15px/18px "Liberation Serif", serif;
    color: #444;
}
.fx small {
    font-size: 11px;
}
.formula {
    flex: 1;
}
.expand {
    width: 15px;
    padding-left: 3px;
    border-left: 1px solid #5f87b8;
    background: linear-gradient(#fff, #bcd2f0);
}

/* Таблица */
.workspace {
    position: relative;
    display: flex;
    flex: 1;
    min-height: 0;
    margin-top: 3px;
    border-top: 1px solid #5f87b8;
    background: #fff;
}
.sheet {
    flex: 1;
    min-width: 0;
    overflow: hidden;
}
.grid {
    table-layout: fixed;
    border-spacing: 0;
    font-size: 13px;
    line-height: 17px;
    color: #000;
}
.row-head {
    width: 26px;
}
.grid th, .grid td {
    height: 20px;
    padding: 2px 2px 0;
    border-right: 1px solid #d0d7e5;
    border-bottom: 1px solid #d0d7e5;
    white-space: nowrap;
}
.grid th {
    padding: 2px 0 0;
    border-color: #9eb6ce;
    background: #e4ecf7;
    font-weight: normal;
    color: #27413e;
}
.grid thead th {
    background: linear-gradient(#f9fcfd, #d3dbe9);
}
.grid thead .corner {
    background: linear-gradient(135deg, transparent 50%, #e2ecf9 50%) 9px 5px / 12px 12px no-repeat, #a9c4e9;
}
.grid .current {
    border-color: #f29536;
    background: #ffd58d;
}
.grid thead .current {
    background: linear-gradient(#f9d99f, #f1c15f);
}
.grid .number {
    text-align: right;
}
.grid .spill {
    border-right-color: #fff;
}
.grid .selected {
    position: relative;
}
.grid .selected::after {
    content: "";
    position: absolute;
    inset: -2px;
    border: 3px solid #000;
}
.vscroll {
    display: flex;
    flex-direction: column;
    align-items: center;
    flex: none;
    width: 15px;
    border-left: 1px solid #5f87b8;
    background: linear-gradient(90deg, #6788ba, #8eaddb);
    fill: #33425e;
}
.vscroll .split {
    width: 13px;
    height: 5px;
    border: 1px solid #fff;
    background: #8eaddb;
}
.vscroll button {
    padding: 6px 0;
}
.vscroll .thumb {
    flex: 1;
    width: 13px;
    margin-bottom: 40px;
    border: 1px solid #4d6693;
    border-radius: 2px;
    background:
        repeating-linear-gradient(#5b7396 0 1px, transparent 1px 2px) center / 7px 7px no-repeat,
        linear-gradient(90deg, #f2f5f8, #d5dde7 50%, #a6b8cd 51%, #d0dae6);
}

/* Окно надстроек */
.dialog {
    position: absolute;
    top: 159px;
    left: 777px;
    width: 364px;
    padding: 2px 2px 10px;
    border: 1px solid;
    border-color: #d4d0c8 #404040 #404040 #d4d0c8;
    background: #d4d0c8;
    box-shadow: inset 1px 1px #fff, inset -1px -1px #808080;
    font: 11px/13px Tahoma, "Liberation Sans", sans-serif;
    color: #000;
}
.dialog-title {
    display: flex;
    align-items: center;
    gap: 2px;
    height: 18px;
    padding: 0 2px;
    background: linear-gradient(90deg, #0a246a, #a6caf0);
}
.dialog-title h2 {
    flex: 1;
    font: bold 11px/13px Tahoma, "DejaVu Sans Condensed", sans-serif;
    color: #fff;
}
.dialog button {
    display: flex;
    align-items: center;
    justify-content: center;
    border: 1px solid;
    border-color: #fff #404040 #404040 #fff;
    background: #d4d0c8;
    box-shadow: inset -1px -1px #808080;
}
.dialog-title button {
    width: 16px;
    height: 14px;
    font-weight: bold;
    font-size: 12px;
}
.dialog-body {
    display: flex;
    gap: 9px;
    padding: 9px 6px 0;
}
.addins {
    flex: 1;
}
.addins p {
    height: 15px;
}
.listbox {
    display: flex;
    height: 228px;
    border: 1px solid;
    border-color: #808080 #fff #fff #808080;
    background: #fff;
    box-shadow: inset 1px 1px #404040, inset -1px -1px #d4d0c8;
    padding: 1px;
}
.items {
    flex: 1;
}
.items label {
    display: flex;
    align-items: center;
    height: 14px;
    gap: 2px;
    padding-left: 1px;
}
.items span {
    flex: 1;
    padding-left: 1px;
}
.items input {
    appearance: none;
    width: 12px;
    height: 12px;
    border: 2px solid;
    border-color: #606060 #d4d0c8 #d4d0c8 #606060;
}
.items input:checked::after {
    content: "";
    display: block;
    width: 8px;
    height: 8px;
    background: #000;
    clip-path: polygon(0 35%, 35% 65%, 100% 0, 100% 40%, 35% 100%, 0 70%);
}
.items .chosen {
    outline: 1px dotted #000;
    outline-offset: -1px;
}
.items .chosen span {
    background: #0a246a;
    color: #fff;
}
.list-scroll {
    display: flex;
    flex-direction: column;
    justify-content: space-between;
    width: 16px;
    background: repeating-conic-gradient(#d4d0c8 0 25%, #fff 0 50%) 0 0 / 2px 2px;
}
.list-scroll button {
    height: 16px;
}
.dialog-buttons {
    display: flex;
    flex-direction: column;
    gap: 7px;
    width: 108px;
    padding-top: 15px;
}
.dialog-buttons button {
    display: block;
    height: 23px;
}
.dialog-buttons .default {
    border-color: #000;
    box-shadow: inset 1px 1px #fff, inset -1px -1px #404040, inset -2px -2px #808080;
}
.dialog fieldset {
    height: 77px;
    margin: 4px 7px 0 6px;
    padding: 7px 12px 0;
    border: 1px solid #808080;
    box-shadow: 1px 1px #fff, inset 1px 1px #fff;
}
.dialog legend {
    margin-left: -9px;
    padding: 0 1px;
    background: #d4d0c8;
}
.dialog fieldset p {
    text-align: center;
}

/* Ярлычки листов */
.sheet-bar {
    display: flex;
    flex: none;
    height: 15px;
    border-top: 1px solid #8aa9d6;
    background: linear-gradient(#8aa9d6, #a3bbdf);
}
.sheet-nav {
    display: flex;
    align-items: center;
    gap: 7px;
    width: 59px;
    padding-left: 4px;
    background: linear-gradient(#b5d3fb, #d4e5fc);
    border-right: 1px solid #8db2e3;
    fill: #15428b;
}
.sheet-tabs {
    display: flex;
    flex: 1;
}
.sheet-tabs button {
    position: relative;
    width: 50px;
    padding: 0 0 0 10px;
    background: linear-gradient(#b5d3fb, #d9e8fd);
    text-align: left;
    line-height: 14px;
}
.sheet-tabs button::after {
    content: "";
    position: absolute;
    z-index: 1;
    top: 0;
    right: -6px;
    width: 12px;
    height: 100%;
    border-right: 1px solid #5f87b8;
    background: inherit;
    transform: skewX(-40deg);
}
.sheet-tabs span {
    position: relative;
    z-index: 2;
}
.sheet-tabs .active {
    width: 56px;
    background: #fff;
    font-weight: bold;
}
.sheet-tabs .insert {
    width: 30px;
    padding-left: 5px;
}
.insert svg {
    position: relative;
    z-index: 2;
}
.hscroll {
    display: flex;
    align-items: center;
    width: 777px;
    padding-right: 15px;
    background: #7a99c6;
    fill: #33425e;
}
.hscroll .split {
    width: 5px;
    height: 12px;
    border: 1px solid #fff;
    background: #8eaddb;
}
.hscroll button {
    padding: 0 6px;
}
.hscroll .thumb {
    flex: 1;
    height: 13px;
    margin-right: 52px;
    border: 1px solid #4d6693;
    border-radius: 2px;
    background:
        repeating-linear-gradient(90deg, #5b7396 0 1px, transparent 1px 2px) center / 7px 7px no-repeat,
        linear-gradient(#f2f5f8, #d5dde7 45%, #b4c3d5 50%, #a9bad0);
}

/* Строка состояния */
.status-bar {
    display: flex;
    flex: none;
    height: 23px;
    border-top: 1px solid #5f87b8;
    background: linear-gradient(#dceafc, #c6dcf8 7px, #b5d2f6 8px, #d7e6f9);
}
.ready {
    width: 53px;
    padding: 3px 0 0 7px;
    border-right: 1px solid #86a9dc;
}
.zoom {
    display: flex;
    align-items: center;
    margin-left: auto;
    padding: 0 5px 2px;
    border-left: 1px solid #5f87b8;
    background: linear-gradient(#b5cff2, #8fb2e2 8px, #7ea6dc 9px, #9dbeea);
}
.views {
    display: flex;
    border: 1px solid #6d8fc0;
    border-radius: 2px;
    background: linear-gradient(#dce8f8, #b9cdea);
}
.views button {
    padding: 3px 3px;
}
.views .active {
    background: linear-gradient(#fde3a4, #fbc85e);
}
.percent {
    padding: 0 8px 0 7px;
}
.zoom input {
    appearance: none;
    width: 102px;
    height: 16px;
    background: linear-gradient(#44608c, #44608c) center / 100% 1px no-repeat;
}
.zoom input::-webkit-slider-thumb {
    appearance: none;
    width: 9px;
    height: 13px;
    border: 1px solid #44608c;
    border-radius: 1px 1px 5px 5px;
    background: linear-gradient(90deg, #f4f7fb, #c8d4e4);
}

/* Панель задач */
.taskbar {
    display: flex;
    flex: none;
    height: 43px;
    padding: 3px 2px;
    border-top: 1px solid #fff;
    background: #d4d0c8;
    font: 11px/16px Tahoma, "DejaVu Sans Condensed", sans-serif;
    color: #000;
}
.start {
    display: flex;
    align-items: center;
    gap: 1px;
    width: 51px;
    padding-left: 1px;
    font-weight: bold;
    font-size: 11px;
}
.start, .apps .open {
    border: 1px solid;
    border-color: #fff #404040 #404040 #fff;
    box-shadow: inset -1px -1px #808080;
}
.apps {
    display: flex;
    gap: 2px;
    margin-left: 9px;
}
.apps button {
    display: flex;
    align-items: center;
    justify-content: center;
    width: 48px;
}
.apps .pressed {
    border-color: #404040 #fff #fff #404040;
    background: #fff;
    box-shadow: inset 1px 1px #808080;
}
.lang {
    margin: 5px 0 9px auto;
    padding: 4px 5px 0 0;
    border-right: 1px solid #808080;
    box-shadow: 1px 0 #fff;
    font-size: 12px;
}
.tray {
    display: flex;
    align-items: center;
    gap: 8px;
    margin-left: 3px;
    padding: 0 1px 0 6px;
    border: 1px solid;
    border-color: #808080 #fff #fff #808080;
}
.tray time {
    width: 58px;
    margin-left: 4px;
    text-align: center;
}
```
